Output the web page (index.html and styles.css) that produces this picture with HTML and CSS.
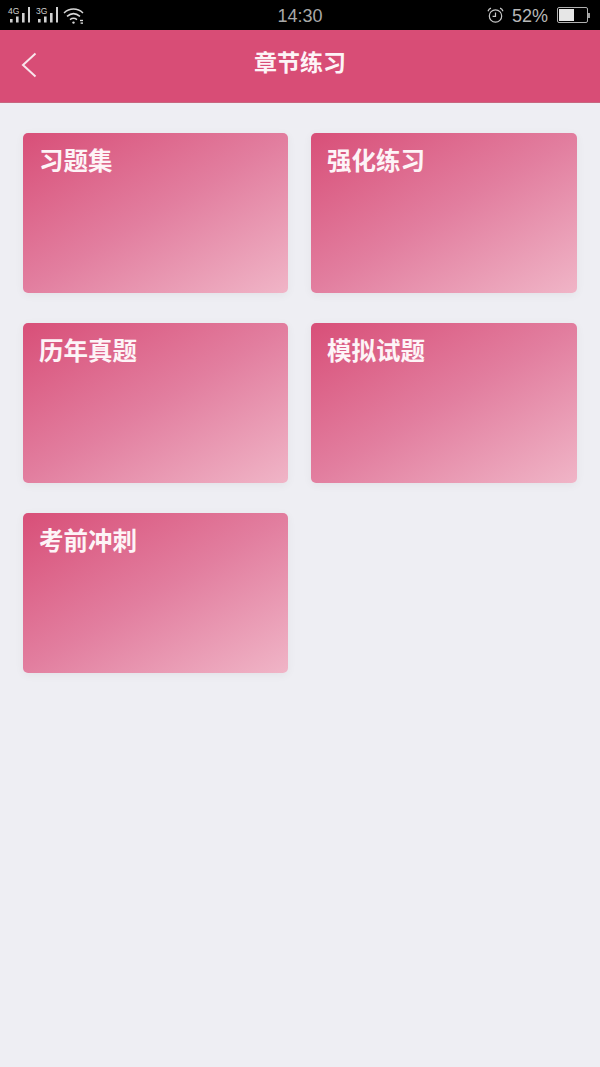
FILE: index.html
```html
<!DOCTYPE html>
<html lang="zh-CN">
<head>
  <meta charset="UTF-8">
  <meta name="viewport" content="width=device-width, initial-scale=1.0">
  <title>章节练习</title>
  <link rel="stylesheet" href="styles.css">
</head>
<body>
  <div class="status-bar">
    <div class="status-left">
      <div class="signal">
        <span class="signal-type">4G</span>
        <svg class="signal-bars" width="22" height="16" viewBox="0 0 22 16">
          <rect x="0" y="12" width="2.6" height="3.5" />
          <rect x="6" y="9.5" width="2.6" height="6" />
          <rect x="12" y="6" width="2.6" height="9.5" />
          <rect x="18" y="0" width="2" height="15.5" />
        </svg>
      </div>
      <div class="signal">
        <span class="signal-type">3G</span>
        <svg class="signal-bars" width="22" height="16" viewBox="0 0 22 16">
          <rect x="0" y="12" width="2.6" height="3.5" />
          <rect x="6" y="9.5" width="2.6" height="6" />
          <rect x="12" y="6" width="2.6" height="9.5" />
          <rect x="18" y="0" width="2" height="15.5" />
        </svg>
      </div>
      <svg class="wifi" width="22" height="18" viewBox="0 0 22 18" fill="none" stroke="#d8d8d8" stroke-width="1.5">
        <path d="M1 6C6.5 0.8 14.5 0.8 20 6" />
        <path d="M4 9.4C8 6 13 6 17 9.4" />
        <path d="M7 12.6C9.4 10.8 11.6 10.8 14 12.6" />
        <circle cx="10.5" cy="15.6" r="1.2" fill="#d8d8d8" stroke="none" />
        <rect x="17" y="12.8" width="3" height="1.4" fill="#d8d8d8" stroke="none" />
        <rect x="17.6" y="15.4" width="2.4" height="1.4" fill="#d8d8d8" stroke="none" />
      </svg>
    </div>
    <div class="status-time">14:30</div>
    <div class="status-right">
      <svg class="alarm" width="17" height="17" viewBox="0 0 17 17" fill="none" stroke="#c8c8c8" stroke-width="1.2">
        <circle cx="8.5" cy="9" r="6.2" />
        <path d="M8.5 5.5V9.3H5.6" />
        <path d="M1 4.2C1.5 2.6 2.5 1.6 4 1.2" />
        <path d="M16 4.2C15.5 2.6 14.5 1.6 13 1.2" />
      </svg>
      <span class="battery-text">52%</span>
      <div class="battery">
        <div class="battery-body"><div class="battery-level"></div></div>
        <div class="battery-cap"></div>
      </div>
    </div>
  </div>

  <header class="nav-bar">
    <svg class="back-icon" width="16" height="26" viewBox="0 0 16 26" fill="none" stroke="#f8e6ec" stroke-width="2">
      <path d="M14.5 1.5L2 13L14.5 24.5" />
    </svg>
    <h1>章节练习</h1>
  </header>

  <main class="card-grid">
    <div class="card"><span class="card-title">习题集</span></div>
    <div class="card"><span class="card-title">强化练习</span></div>
    <div class="card"><span class="card-title">历年真题</span></div>
    <div class="card"><span class="card-title">模拟试题</span></div>
    <div class="card"><span class="card-title">考前冲刺</span></div>
  </main>
</body>
</html>
```

FILE: styles.css
```css
html, body {
  height: 100%;
}
body {
  margin: 0;
  background-color: #eeeef3;
  font-family: "Noto Sans CJK SC", "Liberation Sans", sans-serif;
}

/* Status bar */
.status-bar {
  height: 30px;
  background-color: #000;
  color: #c8c8c8;
  display: grid;
  grid-template-columns: 1fr auto 1fr;
  align-items: center;
  padding: 0 10px 0 8px;
  box-sizing: border-box;
}
.status-left {
  display: flex;
  align-items: center;
  gap: 6px;
  padding-top: 2px;
}
.signal {
  position: relative;
  width: 22px;
  height: 18px;
}
.signal-type {
  position: absolute;
  top: 0;
  left: 0;
  font-family: "Liberation Sans", sans-serif;
  font-size: 8.5px;
  line-height: 9px;
  color: #d0d0d0;
}
.signal-bars {
  position: absolute;
  left: 2px;
  top: 0;
  fill: #d0d0d0;
}
.wifi {
  margin-top: -1px;
  margin-left: -1px;
}
.status-time {
  font-family: "Liberation Sans", sans-serif;
  font-size: 18px;
  color: #a8a8a8;
  padding: 2px 0 0 2px;
}
.status-right {
  display: flex;
  align-items: center;
  justify-content: flex-end;
  gap: 8px;
}
.battery-text {
  font-family: "Liberation Sans", sans-serif;
  font-size: 18px;
  color: #b8b8b8;
  padding-top: 2px;
}
.battery {
  display: flex;
  align-items: center;
  margin-left: 1px;
}
.battery-body {
  width: 27px;
  height: 12px;
  border: 1px solid #b0b0b0;
  border-radius: 2px;
  padding: 1px;
  box-sizing: content-box;
}
.battery-level {
  width: 15px;
  height: 12px;
  background-color: #e6e6e6;
}
.battery-cap {
  width: 2px;
  height: 5px;
  background-color: #a0a0a0;
}

/* Nav bar */
.nav-bar {
  position: relative;
  height: 73px;
  box-sizing: border-box;
  background-color: #d84d76;
  border-bottom: 1px solid #c7667f;
  display: flex;
  align-items: center;
  justify-content: center;
}
.nav-bar h1 {
  margin: 0 0 10px;
  font-size: 23px;
  font-weight: 700;
  color: #fdf4f7;
}
.back-icon {
  position: absolute;
  left: 21px;
  top: 22px;
}

/* Cards */
.card-grid {
  display: grid;
  grid-template-columns: 265px 266px;
  column-gap: 23px;
  row-gap: 30px;
  padding: 30px 0 0 23px;
}
.card {
  height: 160px;
  border-radius: 5px;
  padding: 10px 16px;
  box-sizing: border-box;
  background: linear-gradient(150deg, #d84f78 0%, #e27e9f 50%, #f0b5c7 100%);
  box-shadow: 0 2px 10px rgba(0, 0, 0, 0.05);
}
.card-title {
  font-size: 24.5px;
  line-height: 34px;
  font-weight: 700;
  color: #fdf4f7;
}
```
